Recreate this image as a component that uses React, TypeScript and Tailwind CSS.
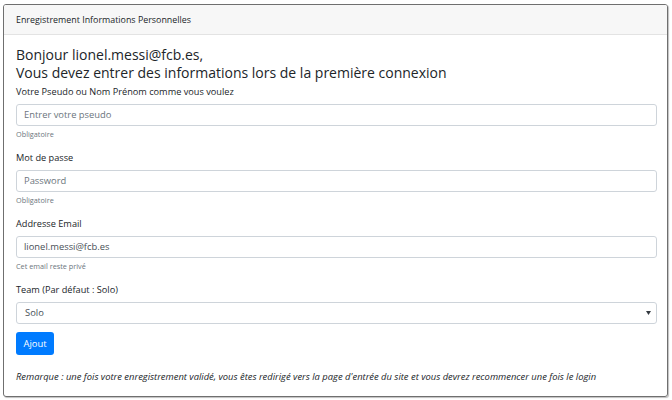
export default function App() {
  return (
    <div className="w-[672px] h-[400px] bg-white pt-[4px] pl-[3px]" style={{ fontFamily: '"Open Sans", "Noto Sans", sans-serif' }}>
      <div className="w-[665px] h-[393px] border border-[#6f6f6f] rounded-[3px] shadow-[1px_1px_1px_rgba(0,0,0,0.25)] overflow-hidden">
        {/* HEADER */}
        <div className="h-[30px] bg-[#f7f7f7] border-b border-[#e3e3e3] flex items-center px-[12px]">
          <span className="text-[8.9px] text-[#212529]">Enregistrement Informations Personnelles</span>
        </div>

        <div className="px-[12px] pt-[11px]">
          <h4 className="text-[14px] leading-[18px] text-[#212529] font-medium">
            Bonjour lionel.messi@fcb.es,
            <br />
            Vous devez entrer des informations lors de la première connexion
          </h4>

          <div className="mt-[4px]">
            <Field label="Votre Pseudo ou Nom Prénom comme vous voulez" placeholder="Entrer votre pseudo" help="Obligatoire" />
            <Field label="Mot de passe" placeholder="Password" help="Obligatoire" />
            <Field label="Addresse Email" value="lionel.messi@fcb.es" help="Cet email reste privé" />

            <label className="block text-[9.2px] leading-[12px] mb-[6px] text-[#212529]">Team (Par défaut : Solo)</label>
            <div className="relative h-[22px] w-[641px] border border-[#ced4da] rounded-[3px] flex items-center px-[8px]">
              <span className="text-[9.4px] text-[#495057]">Solo</span>
              <svg className="absolute right-[5px] top-[8px]" width="5" height="4" viewBox="0 0 5 4">
                <path d="M0 0H5L2.5 4Z" fill="#343a40" />
              </svg>
            </div>

            <button className="mt-[8px] h-[23px] w-[38px] bg-[#007bff] rounded-[3px] text-white text-[9.4px] leading-none">
              Ajout
            </button>

            <p className="mt-[16px] text-[9.4px] leading-[12px] italic text-[#212529]">
              Remarque : une fois votre enregistrement validé, vous êtes redirigé vers la page d'entrée du site et vous devrez recommencer une fois le login
            </p>
          </div>
        </div>
      </div>
    </div>
  );
}

function Field({ label, placeholder, value, help }: { label: string; placeholder?: string; value?: string; help: string }) {
  return (
    <div className="mb-[12px]">
      <label className="block text-[9.2px] leading-[12px] mb-[6px] text-[#212529]">{label}</label>
      <div className="h-[22px] w-[641px] border border-[#ced4da] rounded-[3px] flex items-center px-[7px]">
        <span className={`text-[9.4px] ${value ? "text-[#495057]" : "text-[#6c757d]"}`}>{value ?? placeholder}</span>
      </div>
      <div className="mt-[3px] text-[7.3px] leading-[11px] text-[#6c757d]">{help}</div>
    </div>
  );
}
